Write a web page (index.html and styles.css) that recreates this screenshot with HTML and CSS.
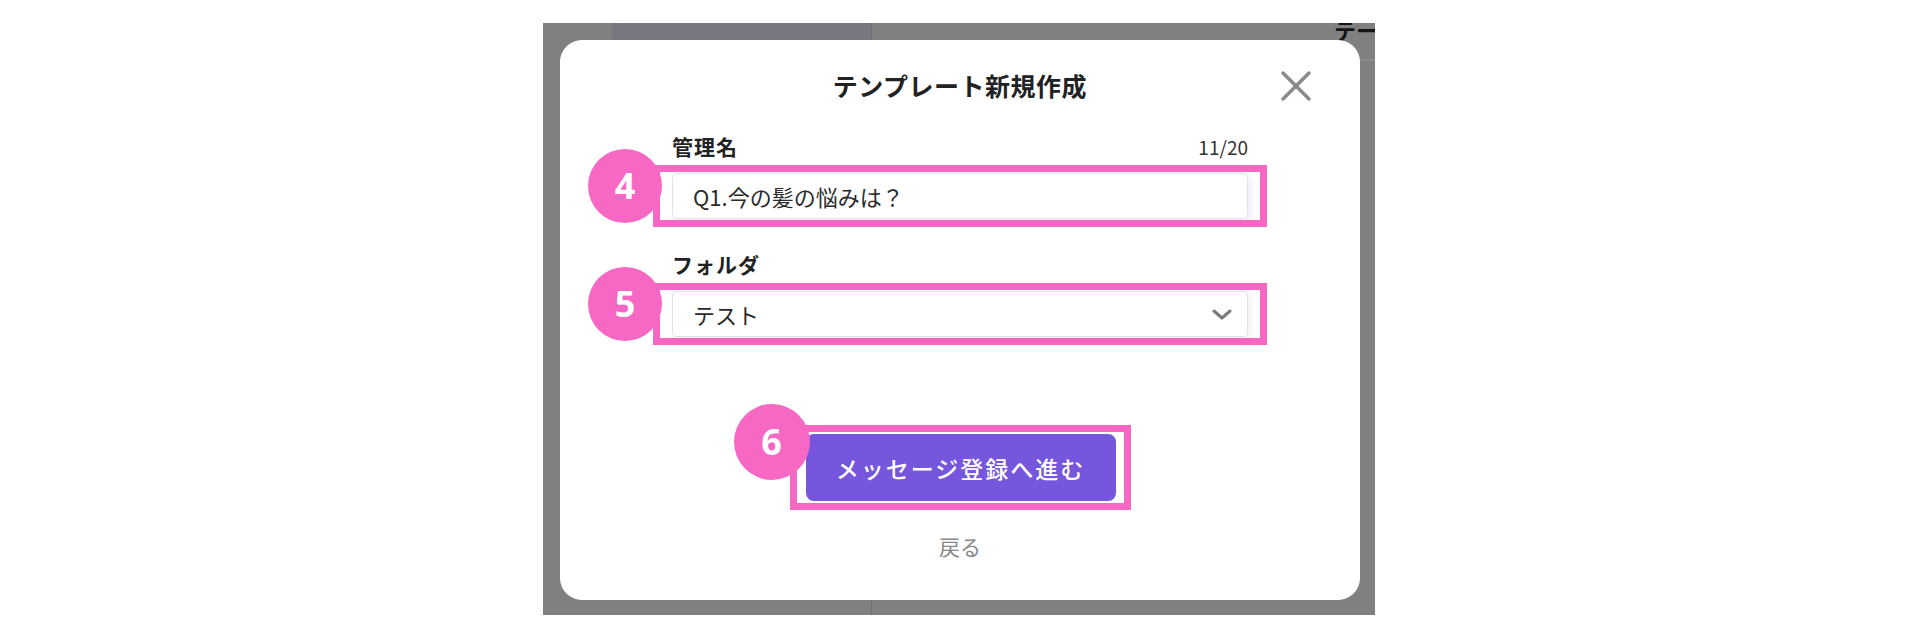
FILE: index.html
```html
<!DOCTYPE html>
<html lang="ja">
<head>
  <meta charset="UTF-8" />
  <title>テンプレート新規作成</title>
  <link rel="stylesheet" href="styles.css">
</head>
<body>
  <div class="shot">
    <!-- 背景の画面 -->
    <div class="app">
      <div class="app-side">
        <div class="side-tab"></div>
      </div>
      <div class="app-main">
        <div class="main-head">テー</div>
      </div>
    </div>

    <!-- モーダル -->
    <div class="modal">
      <h1 class="modal-title">テンプレート新規作成</h1>
      <svg class="close" viewBox="0 0 32 32" width="32" height="32">
        <path d="M3 3 L29 29 M29 3 L3 29" stroke="#8a8a8a" stroke-width="3.5" stroke-linecap="round" fill="none" />
      </svg>

      <div class="field-head">
        <label for="name">管理名</label>
        <span class="count">11/20</span>
      </div>
      <div class="mark">
        <span class="mark-num">4</span>
        <input class="text-input" id="name" type="text" value="Q1.今の髪の悩みは？" />
      </div>

      <div class="field-head second">
        <label>フォルダ</label>
      </div>
      <div class="mark">
        <span class="mark-num">5</span>
        <div class="select">
          <span>テスト</span>
          <svg viewBox="0 0 20 11" width="20" height="11">
            <polyline points="2,2 10,9 18,2" stroke="#7a7a7a" stroke-width="3" stroke-linecap="round" stroke-linejoin="round" fill="none" />
          </svg>
        </div>
      </div>

      <div class="actions">
        <div class="mark mark-btn">
          <span class="mark-num">6</span>
          <button class="primary">メッセージ登録へ進む</button>
        </div>
        <a class="back">戻る</a>
      </div>
    </div>
  </div>
</body>
</html>
```

FILE: styles.css
```css
html, body {
  margin: 0;
  background: #fff;
  font-family: "Noto Sans CJK JP", "Noto Sans", sans-serif;
  color: #222;
}
.shot {
  position: relative;
  width: 832px;
  height: 592px;
  margin: 23px 0 0 543px;
  background: #808080;
  overflow: hidden;
}
.app {
  display: grid;
  grid-template-columns: 329px 1fr;
  height: 100%;
}
.app-side {
  border-right: 1px solid #6f6f6f;
}
.side-tab {
  margin-left: 69px;
  height: 48px;
  background: #77777f;
}
.main-head {
  height: 46px;
  border-bottom: 2px solid #8b8b8b;
  padding-left: 462px;
  margin-top: -10px;
  font-size: 22px;
  font-weight: 700;
  line-height: 32px;
  color: #151515;
  white-space: nowrap;
}
.modal {
  position: absolute;
  left: 17px;
  top: 17px;
  width: 800px;
  height: 560px;
  box-sizing: border-box;
  padding: 28px 112px 0;
  background: #fff;
  border-radius: 22px;
}
.modal-title {
  margin: 0;
  text-align: center;
  font-size: 25px;
  font-weight: 700;
  line-height: 34px;
  letter-spacing: 0.5px;
  color: #222;
}
.close {
  position: absolute;
  top: 30px;
  right: 48px;
}
.field-head {
  display: flex;
  justify-content: space-between;
  align-items: center;
  height: 28px;
  margin-top: 30px;
}
.field-head.second {
  margin-top: 23px;
}
.field-head label {
  font-size: 21px;
  font-weight: 700;
  letter-spacing: 1px;
  color: #222;
}
.count {
  font-size: 19px;
  color: #333;
}
.mark {
  position: relative;
  margin: 5px -19px 0;
  padding: 1px 12px;
  border: 7px solid #f768c4;
}
.mark-num {
  position: absolute;
  left: -72px;
  top: -23px;
  width: 74px;
  height: 74px;
  border-radius: 50%;
  background: #f768c4;
  color: #fff;
  font-family: "Noto Sans", "Open Sans", sans-serif;
  font-size: 36px;
  font-weight: 700;
  line-height: 1;
  display: flex;
  align-items: center;
  justify-content: center;
}
.text-input {
  display: block;
  width: 100%;
  height: 46px;
  box-sizing: border-box;
  padding: 0 20px;
  border: 1px solid #e3e0f4;
  border-radius: 4px;
  box-shadow: 3px 2px 6px rgba(120, 100, 220, 0.12);
  font-family: inherit;
  font-size: 22px;
  color: #2a2a2a;
  outline: none;
}
.select {
  display: flex;
  justify-content: space-between;
  align-items: center;
  height: 46px;
  box-sizing: border-box;
  padding: 0 15px 0 20px;
  border: 1px solid #e2e2e2;
  border-radius: 4px;
  box-shadow: 3px 2px 6px rgba(0, 0, 0, 0.06);
  font-size: 22px;
  color: #2a2a2a;
}
.actions {
  display: flex;
  flex-direction: column;
  align-items: center;
  margin-top: 80px;
}
.mark-btn {
  margin: 0;
  padding: 2px 8px 2px 9px;
}
.mark-btn .mark-num {
  left: -63px;
  top: -28px;
  width: 76px;
  height: 76px;
}
.primary {
  display: block;
  width: 310px;
  height: 67px;
  border: none;
  border-radius: 8px;
  background: #7556dc;
  color: #fff;
  font-family: inherit;
  font-size: 23px;
  font-weight: 500;
  letter-spacing: 2px;
  cursor: pointer;
}
.back {
  margin-top: 22px;
  font-size: 21px;
  line-height: 28px;
  color: #888;
  cursor: pointer;
}
```
